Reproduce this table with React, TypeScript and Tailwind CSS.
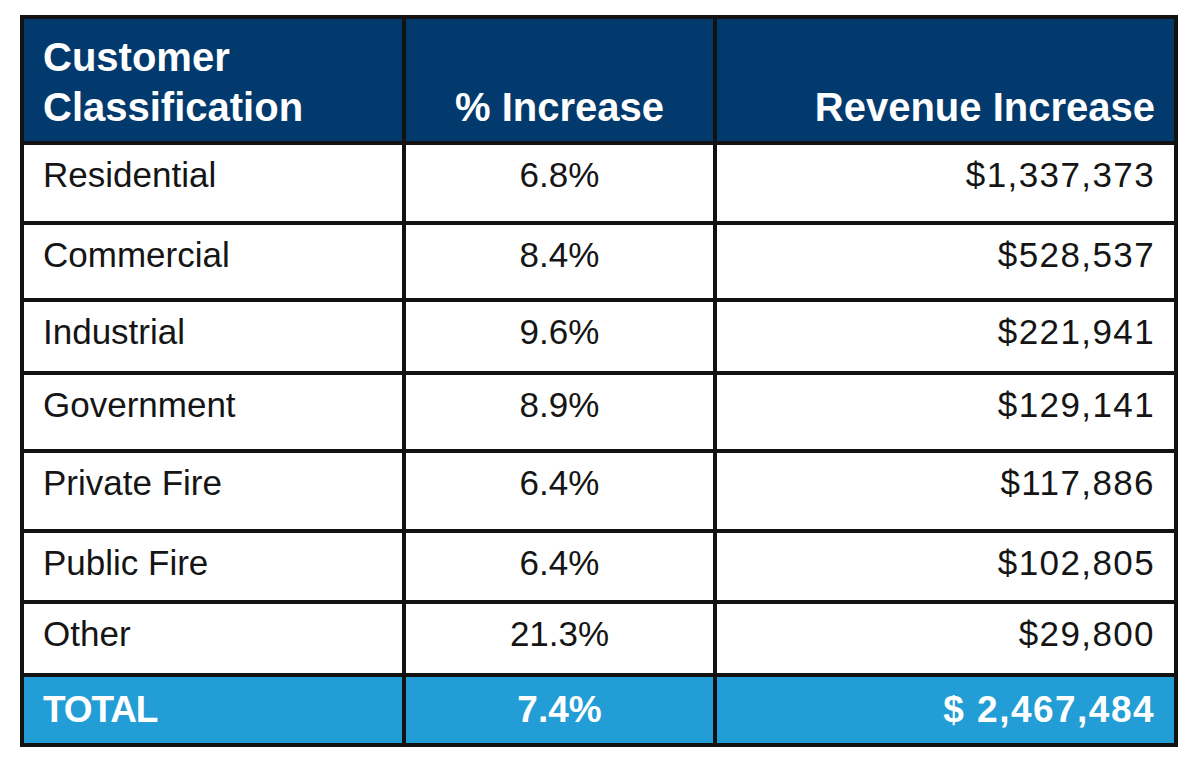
import * as React from "react";

type Row = {
  label: string;
  pct: string;
  revenue: string;
  height: string;
};

// row heights taken from the slide, they are not quite even
const rows: Row[] = [
  { label: "Residential", pct: "6.8%", revenue: "$1,337,373", height: "h-[76px]" },
  { label: "Commercial", pct: "8.4%", revenue: "$528,537", height: "h-[73px]" },
  { label: "Industrial", pct: "9.6%", revenue: "$221,941", height: "h-[69px]" },
  { label: "Government", pct: "8.9%", revenue: "$129,141", height: "h-[74px]" },
  { label: "Private Fire", pct: "6.4%", revenue: "$117,886", height: "h-[76px]" },
  { label: "Public Fire", pct: "6.4%", revenue: "$102,805", height: "h-[67px]" },
  { label: "Other", pct: "21.3%", revenue: "$29,800", height: "h-[69px]" },
];

const font = "font-['Liberation_Sans',Arial,sans-serif]";

export default function App() {
  return (
    <div className={`min-h-[763px] w-[1200px] bg-white pl-[20px] pt-[15px] ${font}`}>
      <div className="grid w-[1158px] grid-cols-[378px_307px_457px] gap-[4px] bg-[#121212] p-[4px]">
        {/* Header */}
        <div className="flex h-[122px] items-end bg-[#033a6d] pb-[9px] pl-[19px] text-[40px] font-bold leading-[50px] text-white">
          <span>
            Customer
            <br />
            Classification
          </span>
        </div>
        <div className="flex h-[122px] items-end justify-center bg-[#033a6d] pb-[9px] text-[40px] font-bold leading-[50px] text-white">
          % Increase
        </div>
        <div className="flex h-[122px] items-end justify-end bg-[#033a6d] pb-[9px] pr-[19px] text-[40px] font-bold leading-[50px] text-white">
          Revenue Increase
        </div>

        {/* Body rows */}
        {rows.map((row) => (
          <React.Fragment key={row.label}>
            <div className={`${row.height} bg-white pl-[19px] pt-[9px] text-[35px] leading-[42px] text-[#151515]`}>
              {row.label}
            </div>
            <div className={`${row.height} bg-white pt-[9px] text-center text-[35px] leading-[42px] text-[#151515]`}>
              {row.pct}
            </div>
            <div className={`${row.height} bg-white pr-[19px] pt-[9px] text-right text-[35px] leading-[42px] tracking-[0.04em] text-[#151515]`}>
              {row.revenue}
            </div>
          </React.Fragment>
        ))}

        {/* Total */}
        <div className="flex h-[66px] items-center bg-[#229dd5] pl-[19px] text-[37px] font-bold tracking-[-0.03em] text-white">
          TOTAL
        </div>
        <div className="flex h-[66px] items-center justify-center bg-[#229dd5] text-[37px] font-bold text-white">
          7.4%
        </div>
        <div className="flex h-[66px] items-center justify-end bg-[#229dd5] pr-[19px] text-[37px] font-bold tracking-[0.04em] text-white">
          $ 2,467,484
        </div>
      </div>
    </div>
  );
}
